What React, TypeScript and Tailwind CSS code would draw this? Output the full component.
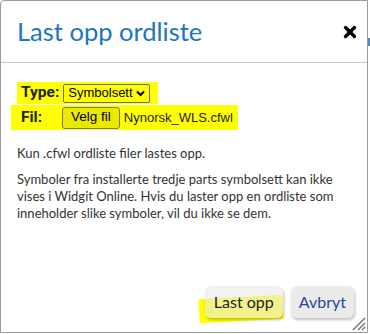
import { X } from "lucide-react";

const hl = "bg-[#ffff00]";

export default function App() {
  return (
    <div className="relative h-[334px] w-[370px] bg-white font-['Lato',sans-serif]">
      {/* sliver of the page behind the dialog */}
      <div className="absolute right-0 top-[38px] h-[8px] w-[2px] bg-[#5b86b8]" />

      <div className="relative flex h-[333px] w-[368px] flex-col rounded-tl-[4px] border border-[#9c9c9c] bg-white">
        <header className="flex h-[62px] flex-none items-center justify-between border-b border-[#c8c8c8] pl-4 pr-[8px]">
          <h1 className="text-[25.5px] leading-none text-[#1b75bf]">Last opp ordliste</h1>
          <X className="h-[18px] w-[18px] text-black" strokeWidth={4.5} />
        </header>

        <div className="flex flex-1 flex-col px-4 pt-[19px] text-[13px] text-[#333]">
          <div className="flex flex-col font-['Liberation_Sans',Arial,sans-serif]">
            <div className={`flex h-[22px] w-[141px] items-center gap-[4px] pl-[4px] ${hl}`}>
              <span className="font-['Roboto',sans-serif] text-[15.5px] font-bold text-[#222]">Type:</span>
              <span className="flex h-[19px] items-center gap-[3px] rounded-[2px] border border-[#6b6b6b] px-[4px] text-[13px] text-black">
                Symbolsett
                <svg width="9" height="7" viewBox="0 0 9 7">
                  <path d="M1 1.5 L4.5 5 L8 1.5" fill="none" stroke="black" strokeWidth="2" />
                </svg>
              </span>
            </div>
            <div className={`-ml-[6px] mt-[1px] flex h-[25px] w-[227px] items-center ${hl}`}>
              <span className="w-[51px] pl-[10px] font-['Roboto',sans-serif] text-[15.5px] font-bold text-[#222]">Fil:</span>
              <span className="flex h-[22px] items-center rounded-[3px] border border-[#767676] bg-[#eaea00] px-[8px] text-[13.5px] text-black">
                Velg fil
              </span>
              <span className="ml-[4px] text-[13px] text-[#222]">Nynorsk_WLS.cfwl</span>
            </div>
          </div>

          <p className="mt-[15px] leading-[17px]">Kun .cfwl ordliste filer lastes opp.</p>
          <p className="mt-[9px] leading-[17px]">
            Symboler fra installerte tredje parts symbolsett kan ikke vises i Widgit Online. Hvis du
            laster opp en ordliste som inneholder slike symboler, vil du ikke se dem.
          </p>

          <div className="-mr-[3px] mt-auto mb-[14px] flex justify-end gap-[8px]">
            <div className="relative">
              <div className="absolute -left-[6px] bottom-[-3px] h-[24px] w-[84px] -rotate-[3deg] bg-[#ffff00]" />
              <button className="relative h-[32px] rounded-[6px] bg-[#e9e9e9]/60 px-[9px] text-[16px] text-[#222] shadow-[1px_2px_3px_rgba(0,0,0,0.25)]">
                Last opp
              </button>
            </div>
            <button className="h-[32px] rounded-[6px] bg-[#ebebeb] px-[8px] text-[16px] text-[#28479a] shadow-[1px_2px_3px_rgba(0,0,0,0.25)]">
              Avbryt
            </button>
          </div>
        </div>

        <svg className="absolute bottom-[1px] right-[1px]" width="16" height="16" viewBox="0 0 16 16">
          <path d="M15 3 L3 15 M15 8 L8 15 M15 12 L12 15" stroke="#777" strokeWidth="1.5" />
        </svg>
      </div>
    </div>
  );
}
